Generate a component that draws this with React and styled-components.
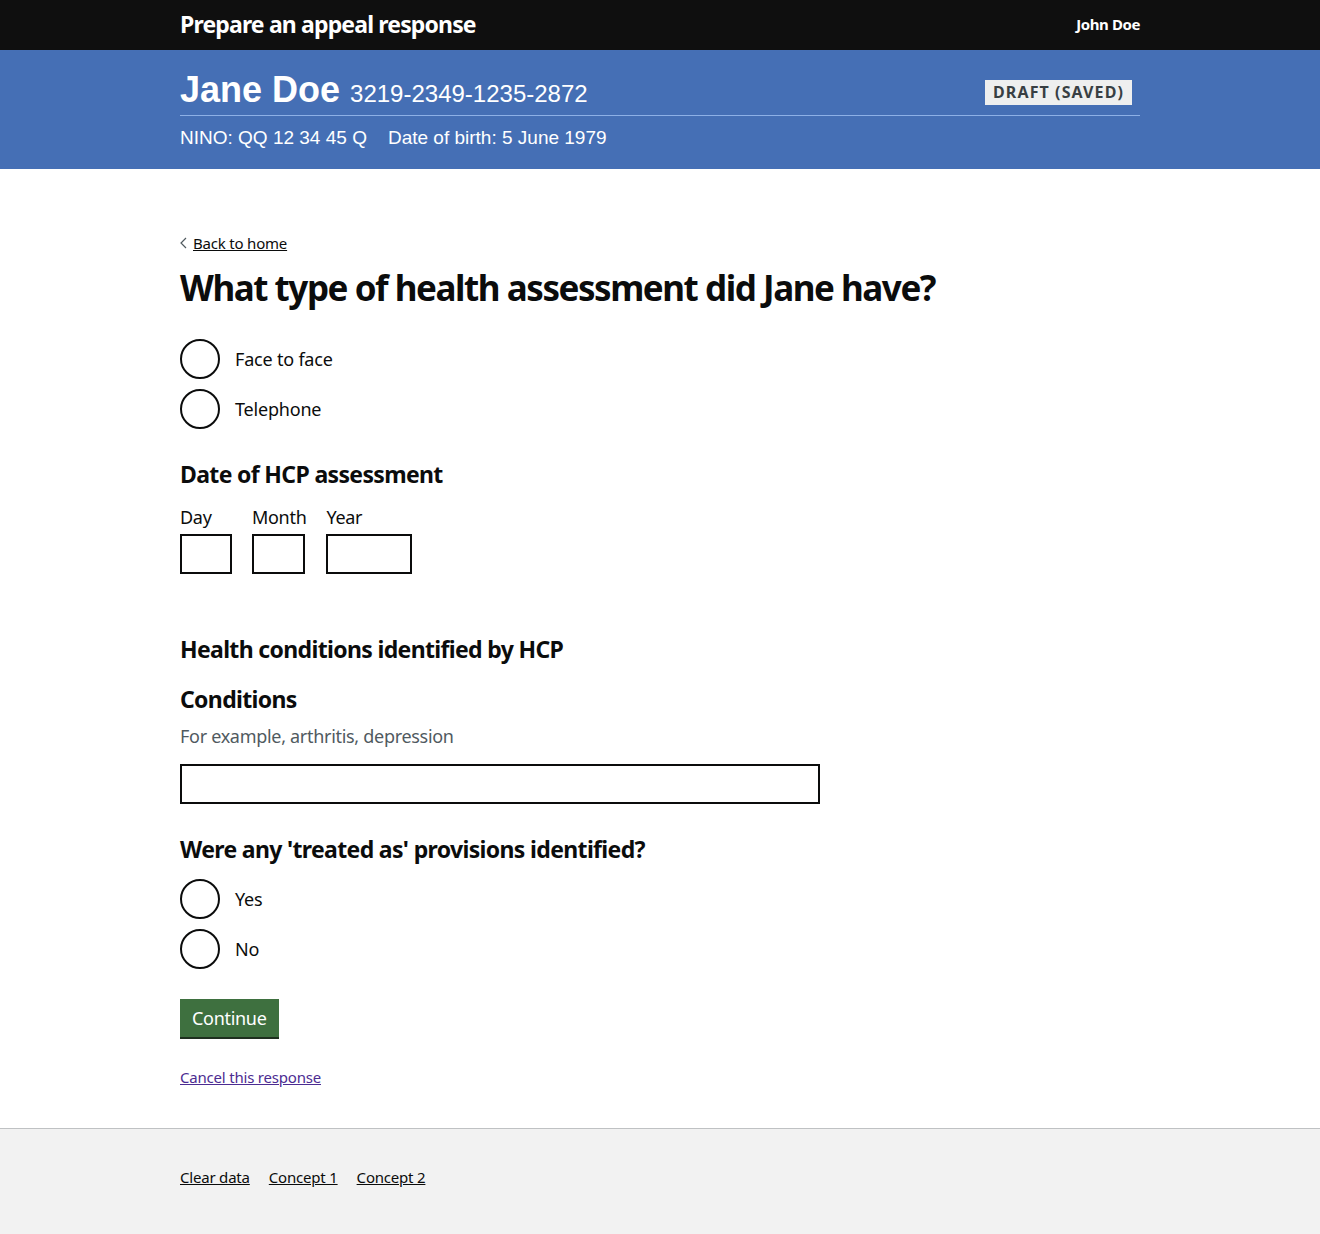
import React from "react";
import styled, { createGlobalStyle } from "styled-components";

const GlobalStyle = createGlobalStyle`
  html, body { margin: 0; padding: 0; background: #fff; }
  body { font-family: "Noto Sans", Arial, sans-serif; color: #0b0c0c; }
  * { box-sizing: border-box; }
`;

const FONT = `"Noto Sans", Arial, sans-serif`;
const ARIAL = `"Liberation Sans", Arial, sans-serif`;

const Page = styled.div`
  display: flex;
  flex-direction: column;
  min-height: 1234px;
`;

const Width = styled.div`
  width: 960px;
  margin: 0 auto;
`;

const TopBar = styled.header`
  background: #0f0f0f;
  height: 50px;
  color: #fff;
`;

const TopInner = styled(Width)`
  height: 100%;
  display: flex;
  align-items: center;
  justify-content: space-between;
`;

const ServiceName = styled.div`
  font-family: ${FONT};
  font-weight: 700;
  font-size: 23px;
  letter-spacing: -0.85px;
  margin-top: -2px;
`;

const UserName = styled.div`
  font-family: ${FONT};
  font-weight: 700;
  font-size: 15px;
  letter-spacing: -0.4px;
  margin-top: -3px;
`;

const Banner = styled.section`
  background: #456fb5;
  color: #fff;
  height: 119px;
  font-family: ${ARIAL};
`;

const BannerInner = styled(Width)`
  padding-top: 19px;
`;

const NameRow = styled.div`
  display: flex;
  align-items: flex-end;
  justify-content: space-between;
  padding-bottom: 7px;
  border-bottom: 1px solid #8db0e6;
  height: 47px;
`;

const NameGroup = styled.div`
  display: flex;
  align-items: baseline;
  gap: 10px;
`;

const Name = styled.span`
  font-size: 36px;
  font-weight: 700;
  line-height: 1;
`;

const CaseRef = styled.span`
  font-size: 24px;
  line-height: 1;
`;

const Tag = styled.span`
  background: #eeefef;
  color: #383f43;
  font-family: ${FONT};
  font-weight: 700;
  font-size: 16px;
  letter-spacing: 1.1px;
  padding: 1px 8px 1px;
  line-height: 23px;
  margin-right: 8px;
  margin-bottom: 3px;
`;

const MetaRow = styled.div`
  display: flex;
  gap: 21px;
  font-size: 19px;
  padding-top: 11px;
`;

const Main = styled(Width)`
  flex: 1;
  padding-top: 63px;
  padding-bottom: 32px;
  font-family: ${FONT};
`;

const BackLink = styled.a`
  display: inline-flex;
  align-items: center;
  gap: 6px;
  font-size: 15px;
  color: #0b0c0c;
  text-decoration: underline;
  letter-spacing: -0.2px;
  cursor: pointer;
`;

const Heading = styled.h1`
  font-size: 35px;
  font-weight: 700;
  letter-spacing: -1.45px;
  line-height: 40px;
  margin: 14px 0 31px;
`;

const RadioGroup = styled.div`
  display: flex;
  flex-direction: column;
  gap: 10px;
`;

const RadioItem = styled.label`
  display: flex;
  align-items: center;
  gap: 15px;
  font-size: 18px;
  letter-spacing: -0.2px;
  cursor: pointer;
`;

const RadioCircle = styled.span`
  width: 40px;
  height: 40px;
  border: 2px solid #0b0c0c;
  border-radius: 50%;
  flex: none;
`;

const SubHeading = styled.h2`
  font-size: 23px;
  font-weight: 700;
  letter-spacing: -0.65px;
  line-height: 30px;
  margin: ${(p) => p.$m || "0"};
`;

const DateRow = styled.div`
  display: flex;
  gap: 20px;
  margin-top: 16px;
`;

const DateField = styled.div`
  display: flex;
  flex-direction: column;
  gap: 5px;
`;

const FieldLabel = styled.label`
  font-size: 18px;
  letter-spacing: -0.3px;
  line-height: 24px;
`;

const TextBox = styled.div`
  width: ${(p) => p.$w}px;
  height: 40px;
  border: 2px solid #0b0c0c;
  background: #fff;
`;

const Hint = styled.div`
  font-size: 18px;
  color: #505a5f;
  letter-spacing: -0.3px;
  margin: 10px 0 16px;
`;

const Button = styled.button`
  display: block;
  margin-top: 30px;
  background: #3e703f;
  color: #fff;
  border: none;
  box-shadow: 0 2px 0 #1e301f;
  font-family: ${FONT};
  font-size: 18px;
  letter-spacing: -0.3px;
  height: 38px;
  padding: 0 12px;
  cursor: pointer;
`;

const CancelLink = styled.a`
  display: inline-block;
  margin-top: 30px;
  font-size: 15px;
  color: #4c2c92;
  text-decoration: underline;
  letter-spacing: -0.2px;
  cursor: pointer;
`;

const Footer = styled.footer`
  background: #f2f2f2;
  border-top: 1px solid #bfc1c3;
  height: 106px;
`;

const FooterInner = styled(Width)`
  display: flex;
  gap: 19px;
  padding-top: 38px;
`;

const FooterLink = styled.a`
  font-family: ${FONT};
  font-size: 15px;
  color: #0b0c0c;
  text-decoration: underline;
  letter-spacing: -0.2px;
  cursor: pointer;
`;

const Chevron = () => (
  <svg width="7" height="12" viewBox="0 0 7 12" fill="none">
    <path d="M6 1L1 6l5 5" stroke="#505a5f" strokeWidth="1.2" />
  </svg>
);

const Radio = ({ label }) => (
  <RadioItem>
    <RadioCircle />
    {label}
  </RadioItem>
);

export default function App() {
  return (
    <Page>
      <GlobalStyle />
      <TopBar>
        <TopInner>
          <ServiceName>Prepare an appeal response</ServiceName>
          <UserName>John Doe</UserName>
        </TopInner>
      </TopBar>
      <Banner>
        <BannerInner>
          <NameRow>
            <NameGroup>
              <Name>Jane Doe</Name>
              <CaseRef>3219-2349-1235-2872</CaseRef>
            </NameGroup>
            <Tag>DRAFT (SAVED)</Tag>
          </NameRow>
          <MetaRow>
            <span>NINO: QQ 12 34 45 Q</span>
            <span>Date of birth: 5 June 1979</span>
          </MetaRow>
        </BannerInner>
      </Banner>
      <Main>
        <BackLink>
          <Chevron />
          Back to home
        </BackLink>
        <Heading>What type of health assessment did Jane have?</Heading>
        <RadioGroup>
          <Radio label="Face to face" />
          <Radio label="Telephone" />
        </RadioGroup>
        <SubHeading $m="30px 0 0">Date of HCP assessment</SubHeading>
        <DateRow>
          <DateField>
            <FieldLabel>Day</FieldLabel>
            <TextBox $w={52} />
          </DateField>
          <DateField>
            <FieldLabel>Month</FieldLabel>
            <TextBox $w={53} />
          </DateField>
          <DateField>
            <FieldLabel>Year</FieldLabel>
            <TextBox $w={86} />
          </DateField>
        </DateRow>
        <SubHeading $m="60px 0 0">Health conditions identified by HCP</SubHeading>
        <SubHeading $m="20px 0 0">Conditions</SubHeading>
        <Hint>For example, arthritis, depression</Hint>
        <TextBox $w={640} />
        <SubHeading $m="30px 0 15px">Were any 'treated as' provisions identified?</SubHeading>
        <RadioGroup>
          <Radio label="Yes" />
          <Radio label="No" />
        </RadioGroup>
        <Button>Continue</Button>
        <CancelLink>Cancel this response</CancelLink>
      </Main>
      <Footer>
        <FooterInner>
          <FooterLink>Clear data</FooterLink>
          <FooterLink>Concept 1</FooterLink>
          <FooterLink>Concept 2</FooterLink>
        </FooterInner>
      </Footer>
    </Page>
  );
}
